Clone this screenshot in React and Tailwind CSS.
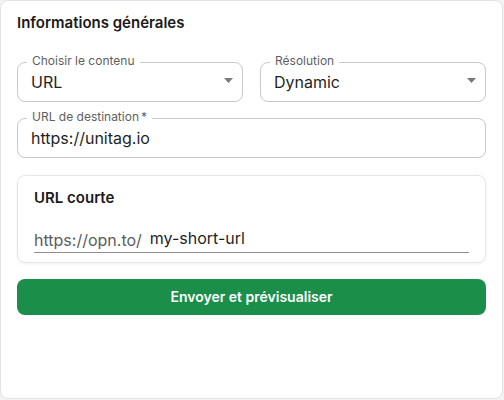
// CORE
import React from "react";

const FONT = { fontFamily: "Inter, 'Noto Sans', sans-serif" };

// little grey caret of the select fields
function Caret() {
    return (
        <svg width="9" height="5" viewBox="0 0 9 5" className="absolute right-[9px] top-[15px]">
            <path d="M0 0 L9 0 L4.5 5 Z" fill="#7a7a7a" />
        </svg>
    );
}

function OutlinedField({ label, value, required, select }) {
    return (
        <div className="relative h-10 border border-[#c9c9c9] rounded-lg flex items-center px-[13px]">
            <span className="absolute top-[-10px] left-[9px] px-[5px] bg-white text-xs leading-4 text-[#5f5f5f]">
                {label}
                {required && <span className="ml-[2px]">*</span>}
            </span>
            <span className="text-base leading-6 text-[#1f1f1f]">{value}</span>
            {select && <Caret />}
        </div>
    );
}

function App() {
    return (
        <div className="w-[504px] h-[400px] bg-[#f3f3f3]" style={FONT}>
            <div className="w-[503px] h-[399px] bg-white border border-[#e3e3e3] rounded-lg px-4 pt-3">
                <h2 className="text-[15px] leading-5 font-semibold text-[#1a1a1a]">Informations générales</h2>

                {/* FIELDS */}
                <div className="mt-[29px] grid grid-cols-2 gap-x-[17px] gap-y-4">
                    <OutlinedField label="Choisir le contenu" value="URL" select />
                    <OutlinedField label="Résolution" value="Dynamic" select />
                    <div className="col-span-2">
                        <OutlinedField label="URL de destination" value="https://unitag.io" required />
                    </div>
                </div>

                {/* SHORT URL */}
                <div className="mt-[17px] border border-[#e6e6e6] rounded-lg shadow-[0_1px_3px_rgba(0,0,0,0.06)] px-4 pt-3 pb-[9px]">
                    <h3 className="text-[15px] leading-5 font-semibold text-[#1a1a1a]">URL courte</h3>
                    <div className="mt-5 flex items-center border-b border-[#8d8d8d] text-base leading-6">
                        <span className="text-[#5c5c5c]">https://opn.to/</span>
                        <span className="ml-2 text-[#1f1f1f] -translate-y-[2px]">my-short-url</span>
                    </div>
                </div>

                <button className="mt-4 w-full h-9 rounded-lg bg-[#1b8e4a] text-white text-sm font-semibold">
                    Envoyer et prévisualiser
                </button>
            </div>
        </div>
    );
}

export default App;
